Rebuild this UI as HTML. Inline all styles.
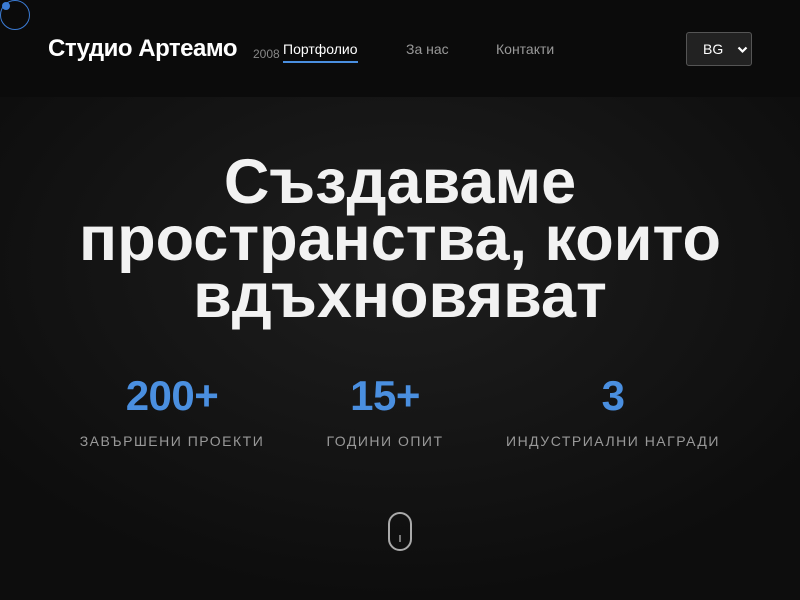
<!DOCTYPE html>
<html><head><meta charset="utf-8"><style>
*{margin:0;padding:0;box-sizing:border-box}
html,body{width:800px;height:600px;overflow:hidden;background:#0b0b0b;font-family:"Liberation Sans",sans-serif}
header{position:absolute;top:0;left:0;width:800px;height:97px;background:#0b0b0b}
.logo{position:absolute;left:48px;top:35px;color:#fff;font-weight:bold;font-size:24px;letter-spacing:-0.5px}
.year{position:absolute;left:253px;top:47px;color:#888;font-size:12px}
.nav{position:absolute;top:41px;font-size:14px;color:#999}
.active{color:#fff;left:283px}
.active:after{content:"";position:absolute;left:0;right:0;top:20px;height:2px;background:#4a8fe0}
.sel{position:absolute;left:686px;top:32px;width:66px;height:34px;border:1px solid #555;border-radius:3px;background:#222;color:#fff;font-size:14px}
.sel span{position:absolute;left:16px;top:8px}
.sel svg{position:absolute;left:50px;top:13px}
.ring{position:absolute;left:0;top:0;width:30px;height:30px;border:1px solid #3b7bd4;border-radius:50%}
.dot{position:absolute;left:2px;top:2px;width:8px;height:8px;background:#3b7bd4;border-radius:50%}
.hero{position:absolute;top:97px;left:0;width:800px;height:503px;background:radial-gradient(ellipse 500px 330px at 400px 170px,#1e1e1e,#0d0d0d)}
h1{position:absolute;top:57px;left:0;width:800px;text-align:center;color:#f2f2f2;font-size:63px;line-height:57px;font-weight:bold}
.stat{position:absolute;top:279px;text-align:center}
.num{color:#4a8fe0;font-size:42px;font-weight:bold;letter-spacing:-0.5px;line-height:40px}
.lab{color:#999;font-size:14px;letter-spacing:1.5px;margin-top:17px;white-space:nowrap}
.mouse{position:absolute;left:388px;top:415px;width:24px;height:39px;border:2px solid #aaa;border-radius:12px}
.mouse:after{content:"";position:absolute;left:9px;top:21px;width:2px;height:7px;background:#777}
</style></head><body>
<header>
<div class="ring"></div><div class="dot"></div>
<div class="logo">Студио Артеамо</div>
<div class="year">2008</div>
<div class="nav active">Портфолио</div>
<div class="nav" style="left:406px">За нас</div>
<div class="nav" style="left:496px">Контакти</div>
<div class="sel"><span>BG</span><svg width="11" height="8" viewBox="0 0 11 8"><path d="M1.5 1.5L5.5 5.5L9.5 1.5" stroke="#fff" stroke-width="2.2" fill="none"/></svg></div>
</header>
<div class="hero">
<h1>Създаваме<br>пространства, които<br>вдъхновяват</h1>
<div class="stat" style="left:72px;width:200px"><div class="num">200+</div><div class="lab">ЗАВЪРШЕНИ ПРОЕКТИ</div></div>
<div class="stat" style="left:285px;width:200px"><div class="num">15+</div><div class="lab">ГОДИНИ ОПИТ</div></div>
<div class="stat" style="left:493px;width:240px"><div class="num">3</div><div class="lab">ИНДУСТРИАЛНИ НАГРАДИ</div></div>
<div class="mouse"></div>
</div>
</body></html>
